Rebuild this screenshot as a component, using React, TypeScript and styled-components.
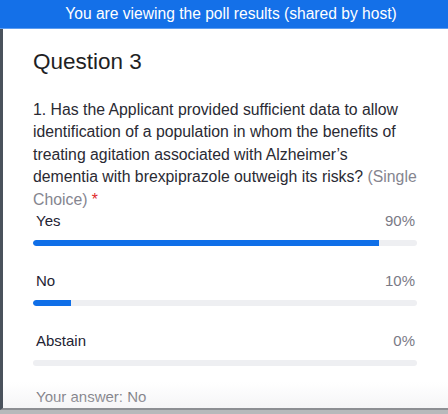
import styled, { createGlobalStyle } from "styled-components";

const GlobalStyle = createGlobalStyle`
  html, body {
    margin: 0;
    padding: 0;
    background: #ffffff;
  }
  body {
    font-family: "Liberation Sans", Arial, sans-serif;
    -webkit-font-smoothing: antialiased;
  }
`;

const Window = styled.div`
  width: 448px;
  height: 414px;
  display: flex;
  flex-direction: column;
  overflow: hidden;
  background: #9a9ca0;
`;

const Banner = styled.div`
  height: 28px;
  flex-shrink: 0;
  background: #1470e8;
  color: #ffffff;
  font-size: 15.6px;
  display: flex;
  align-items: center;
  justify-content: center;
  padding-left: 14px;
  border-bottom: 1px solid #5c9cf0;
`;

const Body = styled.div`
  flex: 1;
  display: flex;
  background: #ffffff;
  border-left: 3px solid #4a525c;
  border-bottom: 2px solid #8d8f93;
  overflow: hidden;
  position: relative;
`;

const Content = styled.div`
  flex: 1;
  padding: 17px 31px 0 30px;
  display: flex;
  flex-direction: column;
`;

const Title = styled.h1`
  margin: 0;
  font-size: 22.5px;
  font-weight: 400;
  color: #1f1f24;
  line-height: 32px;
`;

const Question = styled.p`
  margin: 21px -8px 0 0;
  font-size: 15.8px;
  line-height: 22.4px;
  color: #2a2a33;
  white-space: nowrap;
`;

const Hint = styled.span`
  color: #85858f;
`;

const Required = styled.span`
  color: #e02b2b;
`;

const Options = styled.div`
  margin-top: 0;
  display: flex;
  flex-direction: column;
  gap: 25px;
`;

const Option = styled.div`
  display: flex;
  flex-direction: column;
  gap: 9px;
`;

const OptionRow = styled.div`
  display: flex;
  justify-content: space-between;
  align-items: baseline;
  font-size: 15px;
  line-height: 20px;
  padding: 0 2px 0 3px;
`;

const Label = styled.span`
  color: #232333;
`;

const Percent = styled.span`
  color: #7a7a86;
`;

const Track = styled.div`
  height: 6px;
  border-radius: 3px;
  background: #eeeff2;
  overflow: hidden;
`;

const Fill = styled.div`
  height: 100%;
  background: #0f6fe8;
  border-radius: 3px 0 0 3px;
`;

const Answer = styled.div`
  margin-top: 22px;
  font-size: 15px;
  color: #5f5f69;
  padding-left: 3px;
`;

const Fade = styled.div`
  position: absolute;
  left: 0;
  right: 0;
  bottom: 0;
  height: 26px;
  background: linear-gradient(rgba(255, 255, 255, 0), rgba(236, 236, 238, 0.5));
  pointer-events: none;
`;

const Footer = styled.div`
  height: 4px;
  flex-shrink: 0;
  background: #b8b9bb;
`;

const results = [
  { label: "Yes", pct: 90 },
  { label: "No", pct: 10 },
  { label: "Abstain", pct: 0 },
];

export default function App() {
  return (
    <>
      <GlobalStyle />
      <Window>
        <Banner>You are viewing the poll results (shared by host)</Banner>
        <Body>
          <Content>
            <Title>Question 3</Title>
            <Question>
              1. Has the Applicant provided sufficient data to allow
              <br />
              identification of a population in whom the benefits of
              <br />
              treating agitation associated with Alzheimer’s
              <br />
              dementia with brexpiprazole outweigh its risks? <Hint>(Single</Hint>
              <br />
              <Hint>Choice)</Hint> <Required>*</Required>
            </Question>
            <Options>
              {results.map((r) => (
                <Option key={r.label}>
                  <OptionRow>
                    <Label>{r.label}</Label>
                    <Percent>{r.pct}%</Percent>
                  </OptionRow>
                  <Track>
                    <Fill style={{ width: `${r.pct}%` }} />
                  </Track>
                </Option>
              ))}
            </Options>
            <Answer>Your answer: No</Answer>
          </Content>
          <Fade />
        </Body>
        <Footer />
      </Window>
    </>
  );
}
